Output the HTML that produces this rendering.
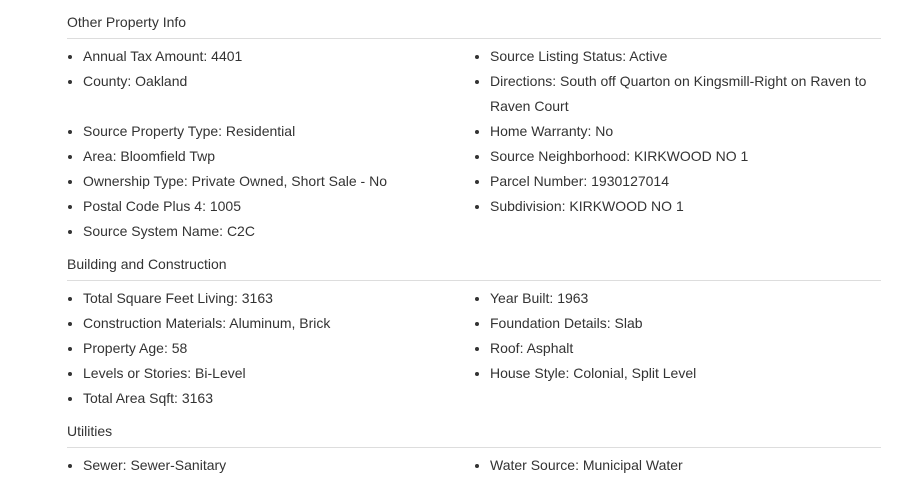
<!DOCTYPE html>
<html><head><style>
body{margin:0;background:#fff;font-family:"Liberation Sans",Arial,sans-serif;color:#333;font-size:14px;}
.wrap{position:absolute;left:67px;top:10px;width:814px;}
h3{margin:0;font-weight:normal;font-size:14px;line-height:24px;padding-bottom:4px;border-bottom:1px solid #ddd;color:#333;}
.cols{display:flex;margin-top:5px;margin-bottom:8px;}
ul{margin:0;padding:0 0 0 16px;list-style:disc;line-height:25px;}
ul.l{width:391px;}
ul.r{width:391px;}
</style></head><body>
<div class="wrap">
<h3>Other Property Info</h3>
<div class="cols">
<ul class="l"><li>Annual Tax Amount: 4401</li><li>County: Oakland</li><li style="margin-top:25px">Source Property Type: Residential</li><li>Area: Bloomfield Twp</li><li>Ownership Type: Private Owned, Short Sale - No</li><li>Postal Code Plus 4: 1005</li><li>Source System Name: C2C</li></ul>
<ul class="r"><li>Source Listing Status: Active</li><li>Directions: South off Quarton on Kingsmill-Right on Raven to Raven Court</li><li>Home Warranty: No</li><li>Source Neighborhood: KIRKWOOD NO 1</li><li>Parcel Number: 1930127014</li><li>Subdivision: KIRKWOOD NO 1</li></ul>
</div>
<h3>Building and Construction</h3>
<div class="cols">
<ul class="l"><li>Total Square Feet Living: 3163</li><li>Construction Materials: Aluminum, Brick</li><li>Property Age: 58</li><li>Levels or Stories: Bi-Level</li><li>Total Area Sqft: 3163</li></ul>
<ul class="r"><li>Year Built: 1963</li><li>Foundation Details: Slab</li><li>Roof: Asphalt</li><li>House Style: Colonial, Split Level</li></ul>
</div>
<h3>Utilities</h3>
<div class="cols">
<ul class="l"><li>Sewer: Sewer-Sanitary</li></ul>
<ul class="r"><li>Water Source: Municipal Water</li></ul>
</div>
</div>
</body></html>
